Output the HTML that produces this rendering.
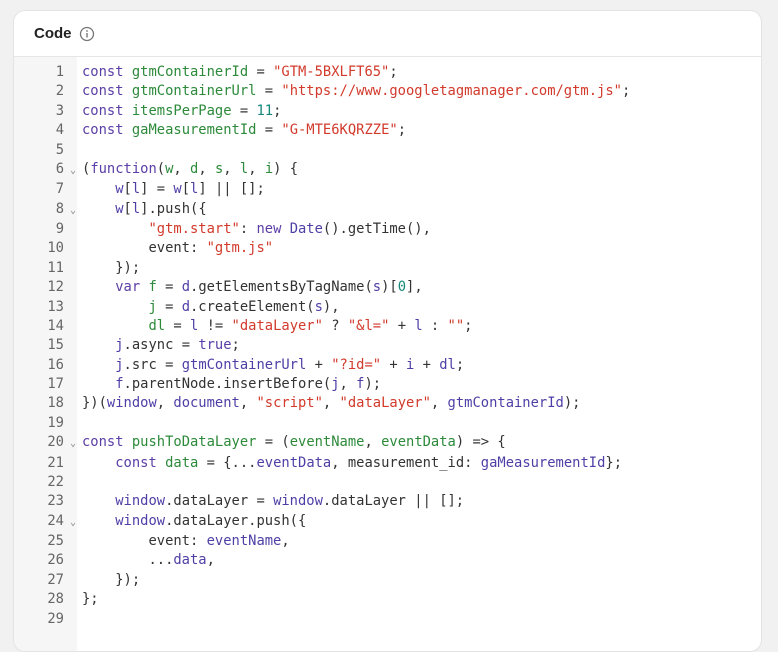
<!DOCTYPE html>
<html><head><meta charset="utf-8">
<style>
html,body{margin:0;padding:0;background:#f1f1f1;width:778px;height:612px;overflow:hidden}
.card{position:absolute;left:13px;top:10px;width:747px;height:640px;background:#fff;border:1px solid #e3e3e3;border-radius:12px;overflow:hidden}
.hd{height:45px;border-bottom:1px solid #e6e6e6;font:bold 15px "Liberation Sans",sans-serif;color:#222;display:flex;align-items:center;padding-left:20px}
.hd svg{margin-left:7px}
.gut{position:absolute;left:0;top:46px;width:63px;bottom:0;background:#f6f6f7}
pre{position:absolute;top:52px;left:0;margin:0;font:13.8px/19.37px "DejaVu Sans Mono",monospace;color:#333}
.n{display:inline-block;width:50px;text-align:right;color:#666;}
.f{display:inline-block;width:18px;color:#888;font-size:10px}
.k{color:#5b3ea6}.v{color:#2c8a3a}.s{color:#d23a2c}.m{color:#13877a}.r{color:#4e3fa6}
</style></head><body>
<div class="card">
<div class="hd">Code <svg width="16" height="16" viewBox="0 0 16 16"><circle cx="8" cy="8" r="6.5" fill="none" stroke="#777" stroke-width="1.3"/><rect x="7.3" y="7" width="1.4" height="4.5" fill="#777"/><circle cx="8" cy="5" r=".9" fill="#777"/></svg></div>
<div class="gut"></div>
<pre><span class="n">1</span><span class="f"></span><span class="k">const</span> <span class="v">gtmContainerId</span> = <span class="s">"GTM-5BXLFT65"</span>;
<span class="n">2</span><span class="f"></span><span class="k">const</span> <span class="v">gtmContainerUrl</span> = <span class="s">"https://www.googletagmanager.com/gtm.js"</span>;
<span class="n">3</span><span class="f"></span><span class="k">const</span> <span class="v">itemsPerPage</span> = <span class="m">11</span>;
<span class="n">4</span><span class="f"></span><span class="k">const</span> <span class="v">gaMeasurementId</span> = <span class="s">"G-MTE6KQRZZE"</span>;
<span class="n">5</span><span class="f"></span>
<span class="n">6</span><span class="f"> ⌄</span>(<span class="k">function</span>(<span class="v">w</span>, <span class="v">d</span>, <span class="v">s</span>, <span class="v">l</span>, <span class="v">i</span>) {
<span class="n">7</span><span class="f"></span>    <span class="r">w</span>[<span class="r">l</span>] = <span class="r">w</span>[<span class="r">l</span>] || [];
<span class="n">8</span><span class="f"> ⌄</span>    <span class="r">w</span>[<span class="r">l</span>].push({
<span class="n">9</span><span class="f"></span>        <span class="s">"gtm.start"</span>: <span class="k">new</span> <span class="r">Date</span>().getTime(),
<span class="n">10</span><span class="f"></span>        event: <span class="s">"gtm.js"</span>
<span class="n">11</span><span class="f"></span>    });
<span class="n">12</span><span class="f"></span>    <span class="k">var</span> <span class="v">f</span> = <span class="r">d</span>.getElementsByTagName(<span class="r">s</span>)[<span class="m">0</span>],
<span class="n">13</span><span class="f"></span>        <span class="v">j</span> = <span class="r">d</span>.createElement(<span class="r">s</span>),
<span class="n">14</span><span class="f"></span>        <span class="v">dl</span> = <span class="r">l</span> != <span class="s">"dataLayer"</span> ? <span class="s">"&amp;l="</span> + <span class="r">l</span> : <span class="s">""</span>;
<span class="n">15</span><span class="f"></span>    <span class="r">j</span>.async = <span class="k">true</span>;
<span class="n">16</span><span class="f"></span>    <span class="r">j</span>.src = <span class="r">gtmContainerUrl</span> + <span class="s">"?id="</span> + <span class="r">i</span> + <span class="r">dl</span>;
<span class="n">17</span><span class="f"></span>    <span class="r">f</span>.parentNode.insertBefore(<span class="r">j</span>, <span class="r">f</span>);
<span class="n">18</span><span class="f"></span>})(<span class="r">window</span>, <span class="r">document</span>, <span class="s">"script"</span>, <span class="s">"dataLayer"</span>, <span class="r">gtmContainerId</span>);
<span class="n">19</span><span class="f"></span>
<span class="n">20</span><span class="f"> ⌄</span><span class="k">const</span> <span class="v">pushToDataLayer</span> = (<span class="v">eventName</span>, <span class="v">eventData</span>) =&gt; {
<span class="n">21</span><span class="f"></span>    <span class="k">const</span> <span class="v">data</span> = {...<span class="r">eventData</span>, measurement_id: <span class="r">gaMeasurementId</span>};
<span class="n">22</span><span class="f"></span>
<span class="n">23</span><span class="f"></span>    <span class="r">window</span>.dataLayer = <span class="r">window</span>.dataLayer || [];
<span class="n">24</span><span class="f"> ⌄</span>    <span class="r">window</span>.dataLayer.push({
<span class="n">25</span><span class="f"></span>        event: <span class="r">eventName</span>,
<span class="n">26</span><span class="f"></span>        ...<span class="r">data</span>,
<span class="n">27</span><span class="f"></span>    });
<span class="n">28</span><span class="f"></span>};
<span class="n">29</span><span class="f"></span></pre>
</div>
</body></html>
